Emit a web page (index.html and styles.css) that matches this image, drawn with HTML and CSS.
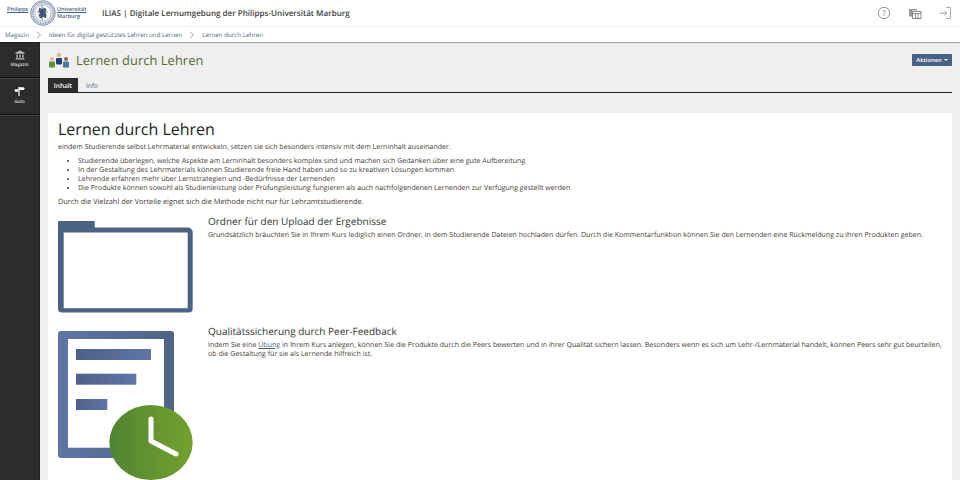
FILE: index.html
```html
<!DOCTYPE html>
<html lang="de">
<head>
<meta charset="utf-8">
<title>Lernen durch Lehren</title>
<link rel="stylesheet" href="styles.css">
</head>
<body>
<header class="topbar">
  <div class="brand">
    <a class="brand-left">Philipps</a>
    <svg class="seal" viewBox="0 0 28 28" width="26" height="26">
      <circle cx="14" cy="14" r="13.2" fill="#eef0f4" stroke="#5b6f92" stroke-width=".8"/>
      <circle cx="14" cy="14" r="11.2" fill="none" stroke="#7f8fab" stroke-width="2" stroke-dasharray="1 .8"/>
      <circle cx="14" cy="14" r="8.8" fill="#fff" stroke="#5b6f92" stroke-width=".5"/>
      <path d="M10 8l3 2 3-2 2 3-2 2 2 3-1 4-3-2-3 2-2-4 2-2-2-2z" fill="#4a5f80"/>
      <path d="M13 6v16M8 13h11" stroke="#2f3f5c" stroke-width=".8"/>
    </svg>
    <div class="brand-right"><span class="uni">Universität</span><span>Marburg</span></div>
  </div>
  <div class="site-title">ILIAS | Digitale Lernumgebung der Philipps-Universität Marburg</div>
  <nav class="top-icons">
    <svg width="14" height="14" viewBox="0 0 14 14"><circle cx="7" cy="7" r="5.7" fill="none" stroke="#777" stroke-width=".8"/><text x="7" y="9.6" text-anchor="middle" class="qmark">?</text></svg>
    <svg width="14" height="14" viewBox="0 0 14 14"><path d="M1 3h8v1.500H4v6H1z" fill="#999"/><path d="M4.500 5.500h8.500v7H4.500z" fill="#fff" stroke="#777" stroke-width=".9"/><path d="M4.500 7.500h8.500M7.500 7.500v5M10 7.500v5" stroke="#777" stroke-width=".8"/></svg>
    <svg width="14" height="14" viewBox="0 0 14 14"><path d="M8 1.500h4.500v11H8" fill="none" stroke="#999" stroke-width=".8"/><path d="M1.500 7.200h7M6.500 5l2.300 2.200-2.300 2.200" fill="none" stroke="#888" stroke-width=".8"/></svg>
  </nav>
</header>
<nav class="crumbs">
  <a>Magazin</a>
  <svg class="chev" width="6" height="8" viewBox="0 0 6 8"><path d="M1 .8 4.500 4 1 7.200" fill="none" stroke="#888" stroke-width=".8"/></svg>
  <a>Ideen für digital gestütztes Lehren und Lernen</a>
  <svg class="chev" width="6" height="8" viewBox="0 0 6 8"><path d="M1 .8 4.500 4 1 7.200" fill="none" stroke="#888" stroke-width=".8"/></svg>
  <a>Lernen durch Lehren</a>
</nav>
<div class="shell">
  <aside class="sidebar">
    <div class="side-item">
      <svg class="side-icon" width="10" height="10" viewBox="0 0 11 11"><path d="M5.500 .5 10.500 3v1H.5V3zM1.500 5h1.500v3.500H1.500zM4.750 5h1.500v3.500h-1.500zM8 5h1.500v3.500H8zM.8 9.200h9.400v1.300H.8z" fill="#bbb"/></svg>
      <span>Magazin</span>
    </div>
    <div class="side-item">
      <svg class="side-icon" width="11" height="11" viewBox="0 0 11 11"><path d="M5 4h4.500l1.300-1.400L9.500 1.200H5zM4.400 3.200H1.500L.2 4.400l1.300 1.300h2.900z" fill="#fff"/><path d="M5 1v9" stroke="#fff" stroke-width="1.200"/></svg>
      <span>Goto</span>
    </div>
  </aside>
  <main class="main">
    <div class="page-head">
      <svg class="group-icon" width="22" height="16" viewBox="0 0 22 16">
        <circle cx="4" cy="7" r="2" fill="#e5b88f"/><rect x="1" y="9.500" width="6" height="6" rx="1" fill="#5f9330"/>
        <circle cx="11" cy="3" r="2.200" fill="#e5b88f"/><rect x="8" y="6" width="6" height="6.500" rx="1" fill="#20406f"/>
        <circle cx="18" cy="7" r="2" fill="#8a6650"/><rect x="15" y="9.500" width="6" height="6" rx="1" fill="#4f74a8"/>
      </svg>
      <h1 class="page-title">Lernen durch Lehren</h1>
      <button class="actions">Aktionen <i class="caret"></i></button>
    </div>
    <div class="tabs">
      <a class="tab active">Inhalt</a>
      <a class="tab">Info</a>
    </div>
    <article class="card">
      <h2 class="card-title">Lernen durch Lehren</h2>
      <p class="text">eindem Studierende selbst Lehrmaterial entwickeln, setzen sie sich besonders intensiv mit dem Lerninhalt auseinander.</p>
      <ul class="list">
        <li>Studierende überlegen, welche Aspekte am Lerninhalt besonders komplex sind und machen sich Gedanken über eine gute Aufbereitung</li>
        <li>In der Gestaltung des Lehrmaterials können Studierende freie Hand haben und so zu kreativen Lösungen kommen</li>
        <li>Lehrende erfahren mehr über Lernstrategien und -Bedürfnisse der Lernenden</li>
        <li>Die Produkte können sowohl als Studienleistung oder Prüfungsleistung fungieren als auch nachfolgendenen Lernenden zur Verfügung gestellt werden</li>
      </ul>
      <p class="text text-wide">Durch die Vielzahl der Vorteile eignet sich die Methode nicht nur für Lehramtstudierende.</p>
      <section class="feature feature-one">
        <div class="thumb">
          <svg width="135" height="92" viewBox="0 0 135 92">
            <path d="M0 1a1 1 0 0 1 1-1h35.700v6.500H130a4.700 4.700 0 0 1 4.700 4.700V87.500a4 4 0 0 1-4 4H4a4 4 0 0 1-4-4z" fill="#4a6385"/>
            <rect x="5.700" y="11.500" width="124" height="75.700" fill="#fff"/>
          </svg>
        </div>
        <div class="feature-body">
          <h3 class="feature-title">Ordner für den Upload der Ergebnisse</h3>
          <p class="text">Grundsätzlich bräuchten Sie in Ihrem Kurs lediglich einen Ordner, in dem Studierende Dateien hochladen dürfen. Durch die Kommentarfunktion können Sie den Lernenden eine Rückmeldung zu ihren Produkten geben.</p>
        </div>
      </section>
      <section class="feature">
        <div class="thumb">
          <svg width="135" height="150" viewBox="0 0 135 150">
            <defs>
              <linearGradient id="blue"><stop offset="0" stop-color="#5f75a6"/><stop offset="1" stop-color="#4f6484"/></linearGradient>
              <linearGradient id="bar"><stop offset="0" stop-color="#4f6087"/><stop offset="1" stop-color="#6076a8"/></linearGradient>
              <linearGradient id="green"><stop offset="0" stop-color="#4f8432"/><stop offset=".6" stop-color="#67962f"/><stop offset="1" stop-color="#74a02e"/></linearGradient>
            </defs>
            <rect width="116" height="127" rx="3" fill="url(#blue)"/>
            <rect x="10" y="8" width="96" height="108.700" fill="#fff"/>
            <rect x="18" y="18" width="75" height="11" fill="url(#bar)"/>
            <rect x="18" y="42.700" width="60.300" height="11" fill="url(#bar)"/>
            <rect x="18" y="68" width="31.300" height="11" fill="url(#bar)"/>
            <ellipse cx="93" cy="111.500" rx="41.700" ry="37.500" fill="url(#green)"/>
            <path d="M93 88v22l25 13" fill="none" stroke="#fff" stroke-width="5" stroke-linecap="round" stroke-linejoin="round"/>
          </svg>
        </div>
        <div class="feature-body">
          <h3 class="feature-title">Qualitätssicherung durch Peer-Feedback</h3>
          <p class="text">Indem Sie eine <a class="link">Übung</a> in Ihrem Kurs anlegen, können Sie die Produkte durch die Peers bewerten und in ihrer Qualität sichern lassen. Besonders wenn es sich um Lehr-/Lernmaterial handelt, können Peers sehr gut beurteilen, ob die Gestaltung für sie als Lernende hilfreich ist.</p>
        </div>
      </section>
    </article>
  </main>
</div>
</body>
</html>
```
FILE: styles.css
```css
* { box-sizing: border-box; }
html, body { margin: 0; padding: 0; height: 480px; overflow: hidden; }
body { font-family: "Open Sans", sans-serif; color: #333; background: #efefef; width: 960px; text-rendering: geometricPrecision; }
h1, h2, h3, p, ul { margin: 0; padding: 0; font-weight: 400; }

.topbar { height: 27px; background: #fff; display: flex; align-items: center; padding-left: 7px; border-bottom: 1px solid #eee; }
.brand { display: flex; align-items: center; width: 95px; font-size: 5.5px; color: #4a5f80; font-weight: 600; line-height: 7px; }
.brand-left { width: 22px; text-decoration: underline; margin-top: -7px; }
.seal { margin-left: 1px; flex: none; }
.brand-right { display: flex; flex-direction: column; margin-left: 1px; }
.uni { text-decoration: underline; }
.site-title { font-size: 8.050px; font-weight: 600; color: #3c3c3c; white-space: nowrap; }
.top-icons { margin-left: auto; margin-right: 8px; display: flex; gap: 16.500px; align-items: center; }
.qmark { font-size: 8px; fill: #777; font-family: "Open Sans", sans-serif; }

.crumbs { height: 15px; background: #fff; display: flex; align-items: center; padding-left: 5px; font-size: 6.200px; color: #4a5f80; box-shadow: 0 1px 1px rgba(0,0,0,.3); position: relative; }
.chev { margin: 0 7.500px 0 6.500px; }

.shell { display: flex; height: 438px; }
.sidebar { width: 40px; background: #2c2c2c; flex: none; border-right: 1px solid #222; }
.side-item { height: 36px; display: flex; flex-direction: column; align-items: center; justify-content: center; gap: 2px; border-bottom: 1px solid #111; box-shadow: 0 1px 0 #444; margin-bottom: 1px; color: #ddd; font-size: 4.500px; font-weight: 600; }
.side-icon { margin-top: -2px; }

.main { flex: 1; padding: 0 8px; min-width: 0; }
.page-head { display: flex; align-items: center; height: 35px; }
.group-icon { flex: none; margin-right: 6px; }
.page-title { font-size: 12.800px; color: #4f6b2f; letter-spacing: .1px; }
.actions { margin-left: auto; height: 12px; width: 40px; background: #4a6385; color: #fff; border: 0; border-radius: 1px; padding: 0; font: 600 5.800px "Open Sans", sans-serif; display: flex; align-items: center; justify-content: center; gap: 2px; }
.caret { width: 0; height: 0; border: 2px solid transparent; border-top-color: #fff; border-bottom: 0; }

.tabs { display: flex; height: 15px; border-bottom: 1px solid #222; font-size: 6.500px; margin-top: 1px; }
.tab { width: 30px; display: flex; align-items: center; justify-content: center; color: #4a5f80; }
.tab.active { background: #2c2c2c; color: #fff; font-weight: 600; }
.tab + .tab { width: 28px; }

.card { background: #fff; margin-top: 20px; padding: 6px 10px 0; height: 367px; overflow: hidden; font-size: 7.050px; line-height: 9px; }
.card-title { font-size: 16px; line-height: 20px; color: #222; margin-bottom: 3.500px; }
.text { font-size: 7.050px; line-height: 9px; color: #3f3a35; }
.text-wide { font-size: 7.350px; }
.list { padding-left: 20px; margin: 5px 0; color: #3f3a35; }
.feature { display: flex; gap: 15px; }
.feature-one { height: 110px; margin-top: 8px; }
.thumb { width: 135px; flex: none; line-height: 0; padding-top: 6px; }
.feature-title { font-size: 10px; line-height: 13px; color: #333; margin-bottom: 3px; }
.feature-body { flex: 1; min-width: 0; }
.link { color: #4a5f80; text-decoration: underline; }
```
